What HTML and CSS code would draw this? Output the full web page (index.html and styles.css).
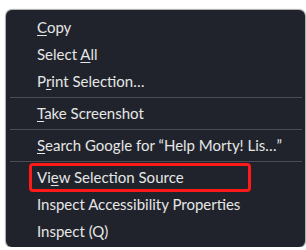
FILE: index.html
```html
<!DOCTYPE html>
<html lang="en">
<head>
  <meta charset="UTF-8">
  <title>Context Menu</title>
  <link rel="stylesheet" href="styles.css">
</head>
<body>
  <div class="menu">
    <div class="item"><u>C</u>opy</div>
    <div class="item">Select <u>A</u>ll</div>
    <div class="item">P<u>r</u>int Selection…</div>
    <div class="sep"></div>
    <div class="item"><u>T</u>ake Screenshot</div>
    <div class="sep"></div>
    <div class="item"><u>S</u>earch Google for “Help Morty! Lis…”</div>
    <div class="sep"></div>
    <div class="item marked">Vi<u>e</u>w Selection Source</div>
    <div class="item">Inspect Accessibility Properties</div>
    <div class="item">Inspect (Q)</div>
  </div>
</body>
</html>
```

FILE: styles.css
```css
body {
  margin: 0;
  background: #ffffff;
  font-family: 'Lato', 'Noto Sans', sans-serif;
}

.menu {
  margin: 10px 0 0 6px;
  width: 299px;
  box-sizing: border-box;
  padding: 4px 0 2px;
  background: #20232b;
  border-radius: 6px;
  box-shadow: 0 0 1px 1px rgba(0, 0, 0, 0.35);
  color: #e6e6e6;
  font-size: 15px;
}

.item {
  position: relative;
  height: 27px;
  line-height: 27px;
  padding-left: 31px;
  white-space: nowrap;
}

.item u {
  text-underline-offset: 2px;
}

.sep {
  height: 1px;
  margin: 2px 3px 2px 4px;
  background: #4a4d55;
}

.marked::after {
  content: '';
  position: absolute;
  left: 23px;
  top: -1px;
  width: 222px;
  height: 29px;
  box-sizing: border-box;
  border: 3px solid #ff1a1a;
  border-radius: 4px;
}
```
